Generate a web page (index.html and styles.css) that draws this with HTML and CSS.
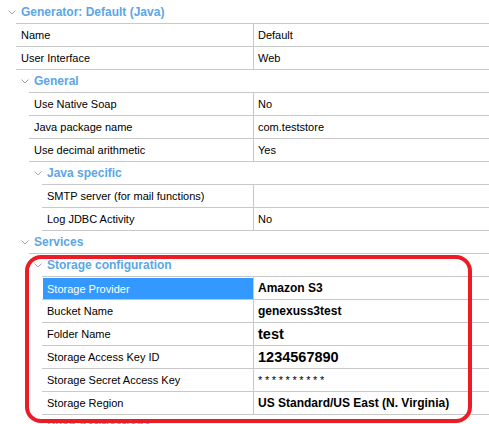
FILE: index.html
```html
<!DOCTYPE html>
<html>
<head>
<meta charset="utf-8">
<link rel="stylesheet" href="styles.css">
</head>
<body>
<div class="tree">
  <div class="group top">
    <div class="hdr"><svg class="chev" width="8" height="5" viewBox="0 0 8 5"><polyline points="0.5,0.5 4,4 7.5,0.5" fill="none" stroke="#a6a6a6" stroke-width="1"/></svg><span>Generator: Default (Java)</span></div>
    <div class="kids">
      <div class="row"><div class="k">Name</div><div class="v">Default</div></div>
      <div class="row"><div class="k">User Interface</div><div class="v">Web</div></div>
      <div class="group">
        <div class="hdr"><svg class="chev" width="8" height="5" viewBox="0 0 8 5"><polyline points="0.5,0.5 4,4 7.5,0.5" fill="none" stroke="#a6a6a6" stroke-width="1"/></svg><span>General</span></div>
        <div class="kids">
          <div class="row"><div class="k">Use Native Soap</div><div class="v">No</div></div>
          <div class="row"><div class="k">Java package name</div><div class="v">com.teststore</div></div>
          <div class="row"><div class="k">Use decimal arithmetic</div><div class="v">Yes</div></div>
          <div class="group">
            <div class="hdr"><svg class="chev" width="8" height="5" viewBox="0 0 8 5"><polyline points="0.5,0.5 4,4 7.5,0.5" fill="none" stroke="#a6a6a6" stroke-width="1"/></svg><span>Java specific</span></div>
            <div class="kids">
              <div class="row"><div class="k">SMTP server (for mail functions)</div><div class="v"></div></div>
              <div class="row"><div class="k">Log JDBC Activity</div><div class="v">No</div></div>
            </div>
          </div>
        </div>
      </div>
      <div class="group">
        <div class="hdr"><svg class="chev" width="8" height="5" viewBox="0 0 8 5"><polyline points="0.5,0.5 4,4 7.5,0.5" fill="none" stroke="#a6a6a6" stroke-width="1"/></svg><span>Services</span></div>
        <div class="kids">
          <div class="group">
            <div class="hdr"><svg class="chev" width="8" height="5" viewBox="0 0 8 5"><polyline points="0.5,0.5 4,4 7.5,0.5" fill="none" stroke="#a6a6a6" stroke-width="1"/></svg><span>Storage configuration</span></div>
            <div class="kids">
              <div class="row"><div class="k sel">Storage Provider</div><div class="v b12">Amazon S3</div></div>
              <div class="row"><div class="k">Bucket Name</div><div class="v b12">genexuss3test</div></div>
              <div class="row"><div class="k">Folder Name</div><div class="v b14">test</div></div>
              <div class="row"><div class="k">Storage Access Key ID</div><div class="v b14">1234567890</div></div>
              <div class="row"><div class="k">Storage Secret Access Key</div><div class="v stars">**********</div></div>
              <div class="row"><div class="k">Storage Region</div><div class="v b12">US Standard/US East (N. Virginia)</div></div>
            </div>
          </div>
          <div class="group">
            <div class="hdr"><svg class="chev" width="8" height="5" viewBox="0 0 8 5"><polyline points="0.5,0.5 4,4 7.5,0.5" fill="none" stroke="#a6a6a6" stroke-width="1"/></svg><span>Push notifications</span></div>
          </div>
        </div>
      </div>
    </div>
  </div>
  <div class="highlight"></div>
</div>
</body>
</html>
```
FILE: styles.css
```css
html, body {
  margin: 0;
  padding: 0;
  background: #ffffff;
}
body {
  width: 489px;
  height: 424px;
  overflow: hidden;
  font-family: "Liberation Sans", Arial, sans-serif;
  font-size: 11px;
  color: #000;
}
.tree {
  position: relative;
  padding-top: 1px;
}
.group.top {
  margin-left: 3px;
}
.hdr {
  height: 22px;
  border-bottom: 1px solid transparent;
  background: linear-gradient(#c8c8c8, #c8c8c8) no-repeat 13px 100% / calc(100% - 13px) 1px;
  background-origin: border-box;
  display: flex;
  align-items: center;
  padding-left: 5px;
  font-weight: bold;
  font-size: 12px;
  color: #5ba6e6;
}
.hdr span {
  margin-left: 5px;
}
.chev {
  display: block;
  margin-top: 1px;
  flex: none;
}
.kids {
  margin-left: 13px;
}
.row {
  display: flex;
  height: 22px;
  border-bottom: 1px solid #c8c8c8;
}
.k {
  flex: 1;
  display: flex;
  align-items: center;
  padding-left: 5px;
  white-space: nowrap;
}
.k.sel {
  background: #3399ff;
  color: #fff;
  margin: 1px 0 0 1px;
  padding-left: 4px;
}
.v {
  width: 231px;
  flex: none;
  border-left: 1px solid #c8c8c8;
  padding-left: 4px;
  display: flex;
  align-items: center;
  white-space: nowrap;
}
.v.b12 {
  font-weight: bold;
  font-size: 12px;
}
.v.b14 {
  font-weight: bold;
  font-size: 14.5px;
}
.v.stars {
  letter-spacing: 2.6px;
  font-size: 11px;
}
.highlight {
  position: absolute;
  left: 25px;
  top: 255px;
  width: 439px;
  height: 160px;
  border: 4px solid #ed1c24;
  border-radius: 16px;
}
```
